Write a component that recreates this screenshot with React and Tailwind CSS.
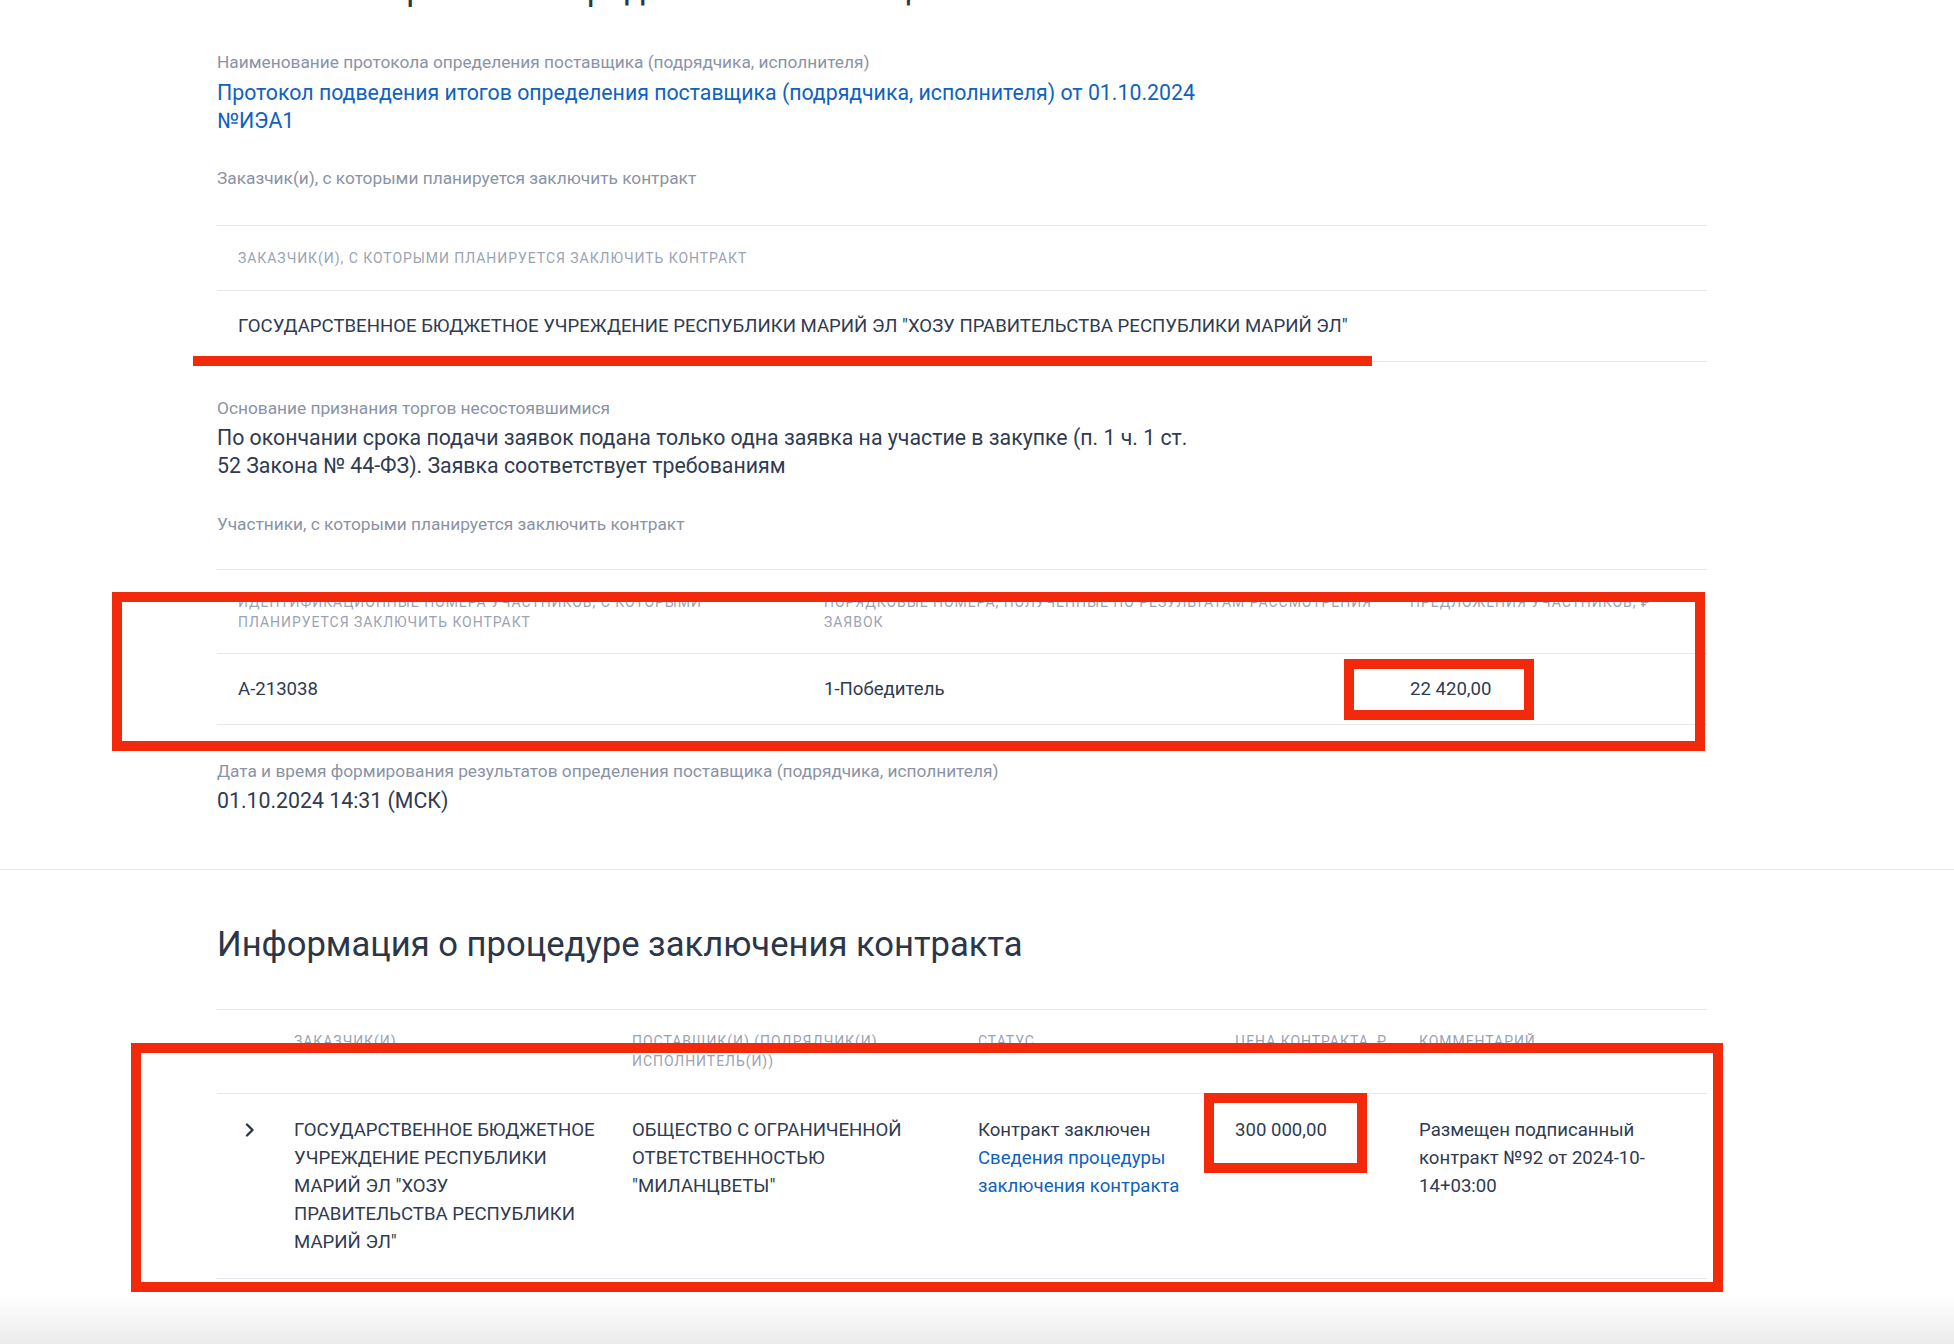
import React from 'react';

const participants = [{ id: 'А-213038', place: '1-Победитель', offer: '22 420,00' }];

function Label({ children, className = '' }) {
  return <div className={`text-[17.3px] leading-[24px] text-[#8a93a6] ${className}`}>{children}</div>;
}

function Th({ children, className = '' }) {
  return (
    <th className={`pl-[21px] pr-[8px] text-left align-top text-[14px] leading-[20px] font-normal uppercase tracking-[0.95px] text-[#9ba3b3] ${className}`}>
      {children}
    </th>
  );
}

function Chevron() {
  return (
    <svg width="10" height="14" viewBox="0 0 10 14" fill="none" className="mt-[7px]">
      <path d="M2 1.5 L7.5 7 L2 12.5" stroke="#2b3649" strokeWidth="2.4" strokeLinecap="round" strokeLinejoin="round" />
    </svg>
  );
}

export default function App() {
  return (
    <div className="relative h-[1344px] overflow-hidden bg-white font-['Roboto',sans-serif] text-[#2f3b52]">
      {/* Протокол */}
      <section className="pl-[217px] pr-[247px] pb-[54px]">
        <h2 className="-mt-[32px] text-[34.6px] leading-[40px] text-[#2b3649]">Итоговый протокол определения поставщика</h2>

        <Label className="mt-[42px]">Наименование протокола определения поставщика (подрядчика, исполнителя)</Label>
        <a href="#" className="mt-[5px] block max-w-[985px] text-[21.3px] leading-[28px] text-[#0f62bf]">
          Протокол подведения итогов определения поставщика (подрядчика, исполнителя) от 01.10.2024 №ИЭА1
        </a>

        <Label className="mt-[31px]">Заказчик(и), с которыми планируется заключить контракт</Label>
        <table className="mt-[35px] w-full border-collapse">
          <thead>
            <tr className="border-y border-[#e6e8ed]">
              <Th className="py-[22px]">Заказчик(и), с которыми планируется заключить контракт</Th>
            </tr>
          </thead>
          <tbody>
            <tr className="border-b border-[#e6e8ed]">
              <td className="py-[21px] pl-[21px] text-[18.6px] leading-[28px]">
                ГОСУДАРСТВЕННОЕ БЮДЖЕТНОЕ УЧРЕЖДЕНИЕ РЕСПУБЛИКИ МАРИЙ ЭЛ "ХОЗУ ПРАВИТЕЛЬСТВА РЕСПУБЛИКИ МАРИЙ ЭЛ"
              </td>
            </tr>
          </tbody>
        </table>

        <Label className="mt-[34px]">Основание признания торгов несостоявшимися</Label>
        <p className="mt-[4px] max-w-[985px] text-[21.3px] leading-[28px]">
          По окончании срока подачи заявок подана только одна заявка на участие в закупке (п. 1 ч. 1 ст. 52 Закона № 44-ФЗ). Заявка соответствует требованиям
        </p>

        <Label className="mt-[32px]">Участники, с которыми планируется заключить контракт</Label>
        <table className="mt-[33px] w-full table-fixed border-collapse">
          <colgroup>
            <col className="w-[586px]" />
            <col className="w-[586px]" />
            <col />
          </colgroup>
          <thead>
            <tr className="border-y border-[#e6e8ed]">
              <Th className="pt-[22px] pb-[21px]">Идентификационные номера участников, с которыми планируется заключить контракт</Th>
              <Th className="pt-[22px] pb-[21px]">Порядковые номера, полученные по результатам рассмотрения заявок</Th>
              <Th className="pt-[22px] pb-[21px]">Предложения участников, ₽</Th>
            </tr>
          </thead>
          <tbody>
            {participants.map(p => (
              <tr key={p.id} className="border-b border-[#e6e8ed] text-[18.6px] leading-[28px]">
                <td className="py-[21px] pl-[21px]">{p.id}</td>
                <td className="py-[21px] pl-[21px]">{p.place}</td>
                <td className="py-[21px] pl-[21px]">{p.offer}</td>
              </tr>
            ))}
          </tbody>
        </table>

        <Label className="mt-[34px]">Дата и время формирования результатов определения поставщика (подрядчика, исполнителя)</Label>
        <div className="mt-[4px] text-[21.3px] leading-[28px]">01.10.2024 14:31 (МСК)</div>
      </section>

      <div className="border-t border-[#e6e8ed]" />

      {/* Заключение контракта */}
      <section className="pl-[217px] pr-[247px]">
        <h2 className="mt-[54px] text-[34.6px] leading-[40px] text-[#2b3649]">Информация о процедуре заключения контракта</h2>
        <table className="mt-[45px] w-full table-fixed border-collapse">
          <colgroup>
            <col className="w-[61px]" />
            <col className="w-[338px]" />
            <col className="w-[346px]" />
            <col className="w-[257px]" />
            <col className="w-[184px]" />
            <col />
          </colgroup>
          <thead>
            <tr className="border-y border-[#e6e8ed]">
              <th />
              <Th className="pt-[21px] pb-[22px] !pl-[16px]">Заказчик(и)</Th>
              <Th className="pt-[21px] pb-[22px] !pl-[16px]">Поставщик(и) (подрядчик(и), исполнитель(и))</Th>
              <Th className="pt-[21px] pb-[22px] !pl-[16px]">Статус</Th>
              <Th className="pt-[21px] pb-[22px] !pl-[16px] !pr-0">Цена контракта, ₽</Th>
              <Th className="pt-[21px] pb-[22px] !pl-[16px]">Комментарий</Th>
            </tr>
          </thead>
          <tbody>
            <tr className="border-b border-[#e6e8ed] align-top text-[18.6px] leading-[28px]">
              <td className="py-[22px] pl-[28px]"><Chevron /></td>
              <td className="py-[22px] pl-[16px] pr-[12px]">
                ГОСУДАРСТВЕННОЕ БЮДЖЕТНОЕ УЧРЕЖДЕНИЕ РЕСПУБЛИКИ МАРИЙ ЭЛ "ХОЗУ ПРАВИТЕЛЬСТВА РЕСПУБЛИКИ МАРИЙ ЭЛ"
              </td>
              <td className="py-[22px] pl-[16px] pr-[8px]">ОБЩЕСТВО С ОГРАНИЧЕННОЙ ОТВЕТСТВЕННОСТЬЮ "МИЛАНЦВЕТЫ"</td>
              <td className="py-[22px] pl-[16px] pr-[8px]">
                Контракт заключен
                <a href="#" className="block text-[#0f62bf]">Сведения процедуры заключения контракта</a>
              </td>
              <td className="py-[22px] pl-[16px]">300 000,00</td>
              <td className="py-[22px] pl-[16px] pr-[8px]">Размещен подписанный контракт №92 от 2024-10-14+03:00</td>
            </tr>
          </tbody>
        </table>
      </section>

      <div className="absolute inset-x-0 bottom-0 h-[48px] bg-linear-to-b from-white to-[#ebebeb]" />

      {/* пометки */}
      <div className="absolute left-[193px] top-[356px] h-[10px] w-[1179px] bg-[#f3290b]" />
      <div className="absolute left-[112px] top-[592px] h-[159px] w-[1593px] border-[10px] border-[#f3290b]" />
      <div className="absolute left-[1344px] top-[659px] h-[61px] w-[190px] border-[10px] border-[#f3290b]" />
      <div className="absolute left-[131px] top-[1043px] h-[249px] w-[1592px] border-[10px] border-[#f3290b]" />
      <div className="absolute left-[1204px] top-[1093px] h-[80px] w-[163px] border-[10px] border-[#f3290b]" />
    </div>
  );
}
